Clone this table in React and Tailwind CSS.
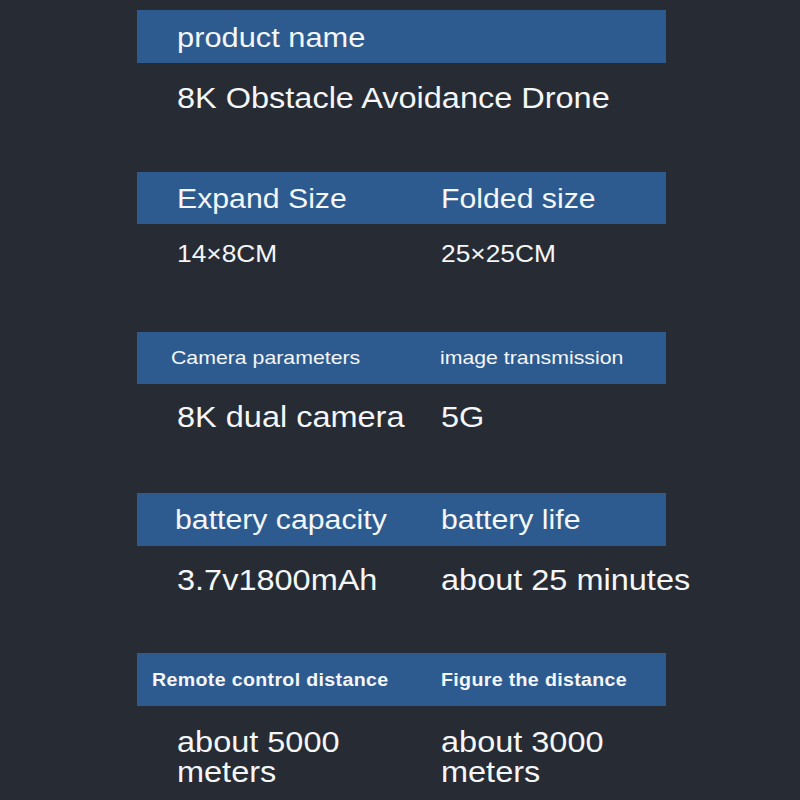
import React from "react";

const font = { fontFamily: '"Liberation Sans", Arial, sans-serif' };

function T({ className = "", children }) {
  return (
    <span className={"inline-block origin-left scale-x-[1.12] whitespace-nowrap " + className}>
      {children}
    </span>
  );
}

export default function App() {
  return (
    <div
      className="w-[800px] h-[800px] overflow-hidden bg-[#262b34] text-[#f4f6f8] pt-[10px]"
      style={font}
    >
      {/* Section 1 */}
      <section className="h-[162px]">
        <div className="ml-[137px] w-[529px] h-[53px] bg-[#2d5b8f] flex items-center pl-[40px] pt-[2px]">
          <T className="text-[27.5px] leading-[30px]">product name</T>
        </div>
        <div className="pl-[177px] pt-[20px]">
          <T className="text-[29px] leading-[30px]">8K Obstacle Avoidance Drone</T>
        </div>
      </section>

      {/* Section 2 */}
      <section className="h-[160px]">
        <div className="ml-[137px] w-[529px] h-[52px] bg-[#2d5b8f] flex items-center pt-[2px]">
          <div className="w-[304px] pl-[40px]">
            <T className="text-[27px] leading-[30px]">Expand Size</T>
          </div>
          <div>
            <T className="text-[27px] leading-[30px]">Folded size</T>
          </div>
        </div>
        <div className="ml-[137px] flex pt-[15px]">
          <div className="w-[304px] pl-[40px]">
            <T className="text-[23.5px] leading-[30px]">14×8CM</T>
          </div>
          <div>
            <T className="text-[23.5px] leading-[30px]">25×25CM</T>
          </div>
        </div>
      </section>

      {/* Section 3 */}
      <section className="h-[161px]">
        <div className="ml-[137px] w-[529px] h-[52px] bg-[#2d5b8f] flex items-center pt-[1px]">
          <div className="w-[303px] pl-[34px]">
            <T className="text-[19px] leading-[24px]">Camera parameters</T>
          </div>
          <div>
            <T className="text-[19px] leading-[24px]">image transmission</T>
          </div>
        </div>
        <div className="ml-[137px] flex pt-[18px]">
          <div className="w-[304px] pl-[40px]">
            <T className="text-[29px] leading-[30px]">8K dual camera</T>
          </div>
          <div>
            <T className="text-[29px] leading-[30px]">5G</T>
          </div>
        </div>
      </section>

      {/* Section 4 */}
      <section className="h-[160px]">
        <div className="ml-[137px] w-[529px] h-[53px] bg-[#2d5b8f] flex items-center pt-[2px]">
          <div className="w-[304px] pl-[38px]">
            <T className="text-[27px] leading-[30px]">battery capacity</T>
          </div>
          <div>
            <T className="text-[27px] leading-[30px]">battery life</T>
          </div>
        </div>
        <div className="ml-[137px] flex pt-[19px]">
          <div className="w-[304px] pl-[40px]">
            <T className="text-[29px] leading-[30px]">3.7v1800mAh</T>
          </div>
          <div>
            <T className="text-[29px] leading-[30px]">about 25 minutes</T>
          </div>
        </div>
      </section>

      {/* Section 5 */}
      <section>
        <div className="ml-[137px] w-[529px] h-[53px] bg-[#2d5b8f] flex items-center pt-[2px]">
          <div className="w-[304px] pl-[15px]">
            <T className="text-[17.5px] leading-[24px] font-bold tracking-[0.3px]">Remote control distance</T>
          </div>
          <div>
            <T className="text-[17.5px] leading-[24px] font-bold tracking-[0.3px]">Figure the distance</T>
          </div>
        </div>
        <div className="ml-[137px] flex pt-[21px]">
          <div className="w-[304px] pl-[40px] text-[29px] leading-[30px]">
            <div><T>about 5000</T></div>
            <div><T>meters</T></div>
          </div>
          <div className="text-[29px] leading-[30px]">
            <div><T>about 3000</T></div>
            <div><T>meters</T></div>
          </div>
        </div>
      </section>
    </div>
  );
}
